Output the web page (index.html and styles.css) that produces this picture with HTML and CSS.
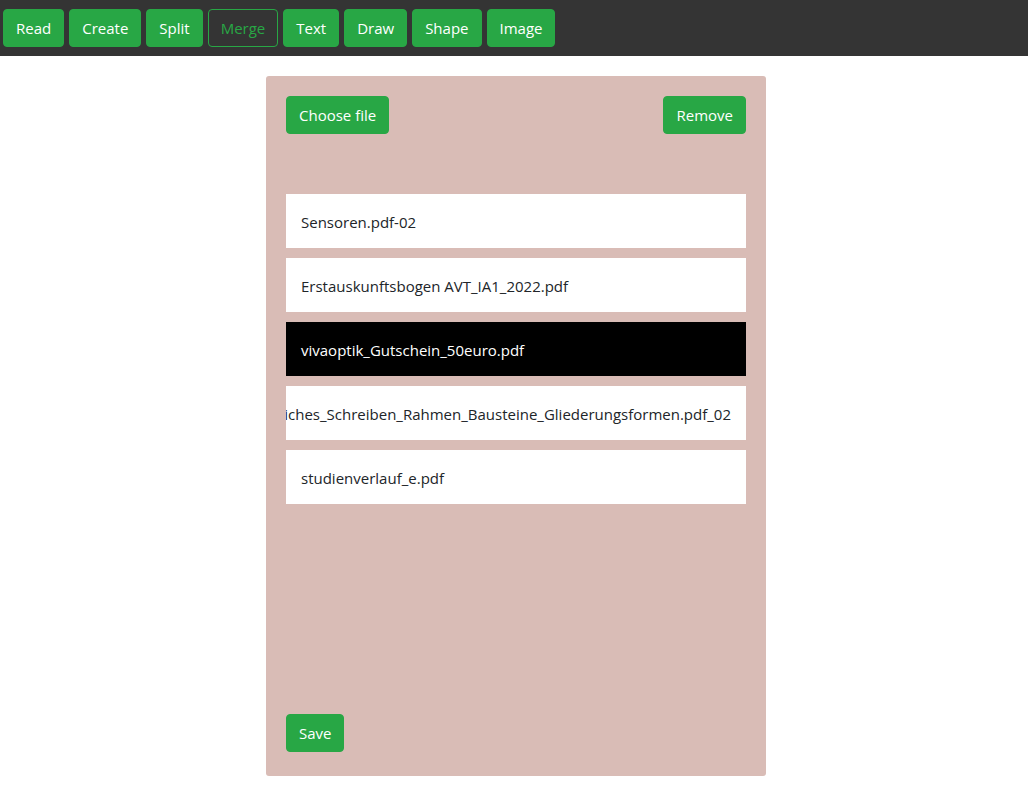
FILE: index.html
```html
<!DOCTYPE html>
<html>
<head>
<meta charset="utf-8">
<link rel="stylesheet" href="styles.css">
</head>
<body>
<nav class="navbar">
  <button class="btn">Read</button>
  <button class="btn">Create</button>
  <button class="btn">Split</button>
  <button class="btn btn-outline">Merge</button>
  <button class="btn">Text</button>
  <button class="btn">Draw</button>
  <button class="btn">Shape</button>
  <button class="btn">Image</button>
</nav>
<main class="main">
  <section class="panel">
    <div class="panel-head">
      <button class="btn">Choose file</button>
      <button class="btn">Remove</button>
    </div>
    <ul class="file-list">
      <li class="file-item"><span>Sensoren.pdf-02</span></li>
      <li class="file-item"><span>Erstauskunftsbogen AVT_IA1_2022.pdf</span></li>
      <li class="file-item selected"><span>vivaoptik_Gutschein_50euro.pdf</span></li>
      <li class="file-item overflow"><span>Wissenschaftliches_Schreiben_Rahmen_Bausteine_Gliederungsformen.pdf_02</span></li>
      <li class="file-item"><span>studienverlauf_e.pdf</span></li>
    </ul>
    <div class="panel-foot">
      <button class="btn">Save</button>
    </div>
  </section>
</main>
</body>
</html>
```
FILE: styles.css
```css
* { box-sizing: border-box; }
body {
  margin: 0;
  font-family: "Open Sans", "Noto Sans", sans-serif;
  font-size: 15px;
  color: #212529;
  background: #fff;
}
.navbar {
  background: #343434;
  height: 56px;
  display: flex;
  align-items: center;
  gap: 5px;
  padding: 0 3px;
}
.btn {
  font-family: inherit;
  font-size: 15px;
  line-height: 24px;
  padding: 6px 12px;
  border: 1px solid #28a745;
  background: #28a745;
  color: #fff;
  border-radius: 4px;
  cursor: pointer;
  white-space: nowrap;
}
.btn-outline {
  background: transparent;
  color: #28a745;
}
.main {
  display: flex;
  justify-content: center;
  padding: 20px 0 0 4px;
}
.panel {
  width: 500px;
  height: 700px;
  background: #d9bcb6;
  border-radius: 3px;
  padding: 20px 20px 24px;
  display: flex;
  flex-direction: column;
}
.panel-head {
  display: flex;
  justify-content: space-between;
}
.file-list {
  list-style: none;
  margin: 60px 0 0;
  padding: 0;
  display: flex;
  flex-direction: column;
  gap: 10px;
}
.file-item {
  background: #fff;
  height: 54px;
  padding: 1px 15px 0;
  display: flex;
  align-items: center;
  overflow: hidden;
  white-space: nowrap;
}
.file-item.selected {
  background: #000;
  color: #fff;
}
.file-item.overflow {
  justify-content: flex-end;
}
.panel-foot {
  margin-top: auto;
}
```
